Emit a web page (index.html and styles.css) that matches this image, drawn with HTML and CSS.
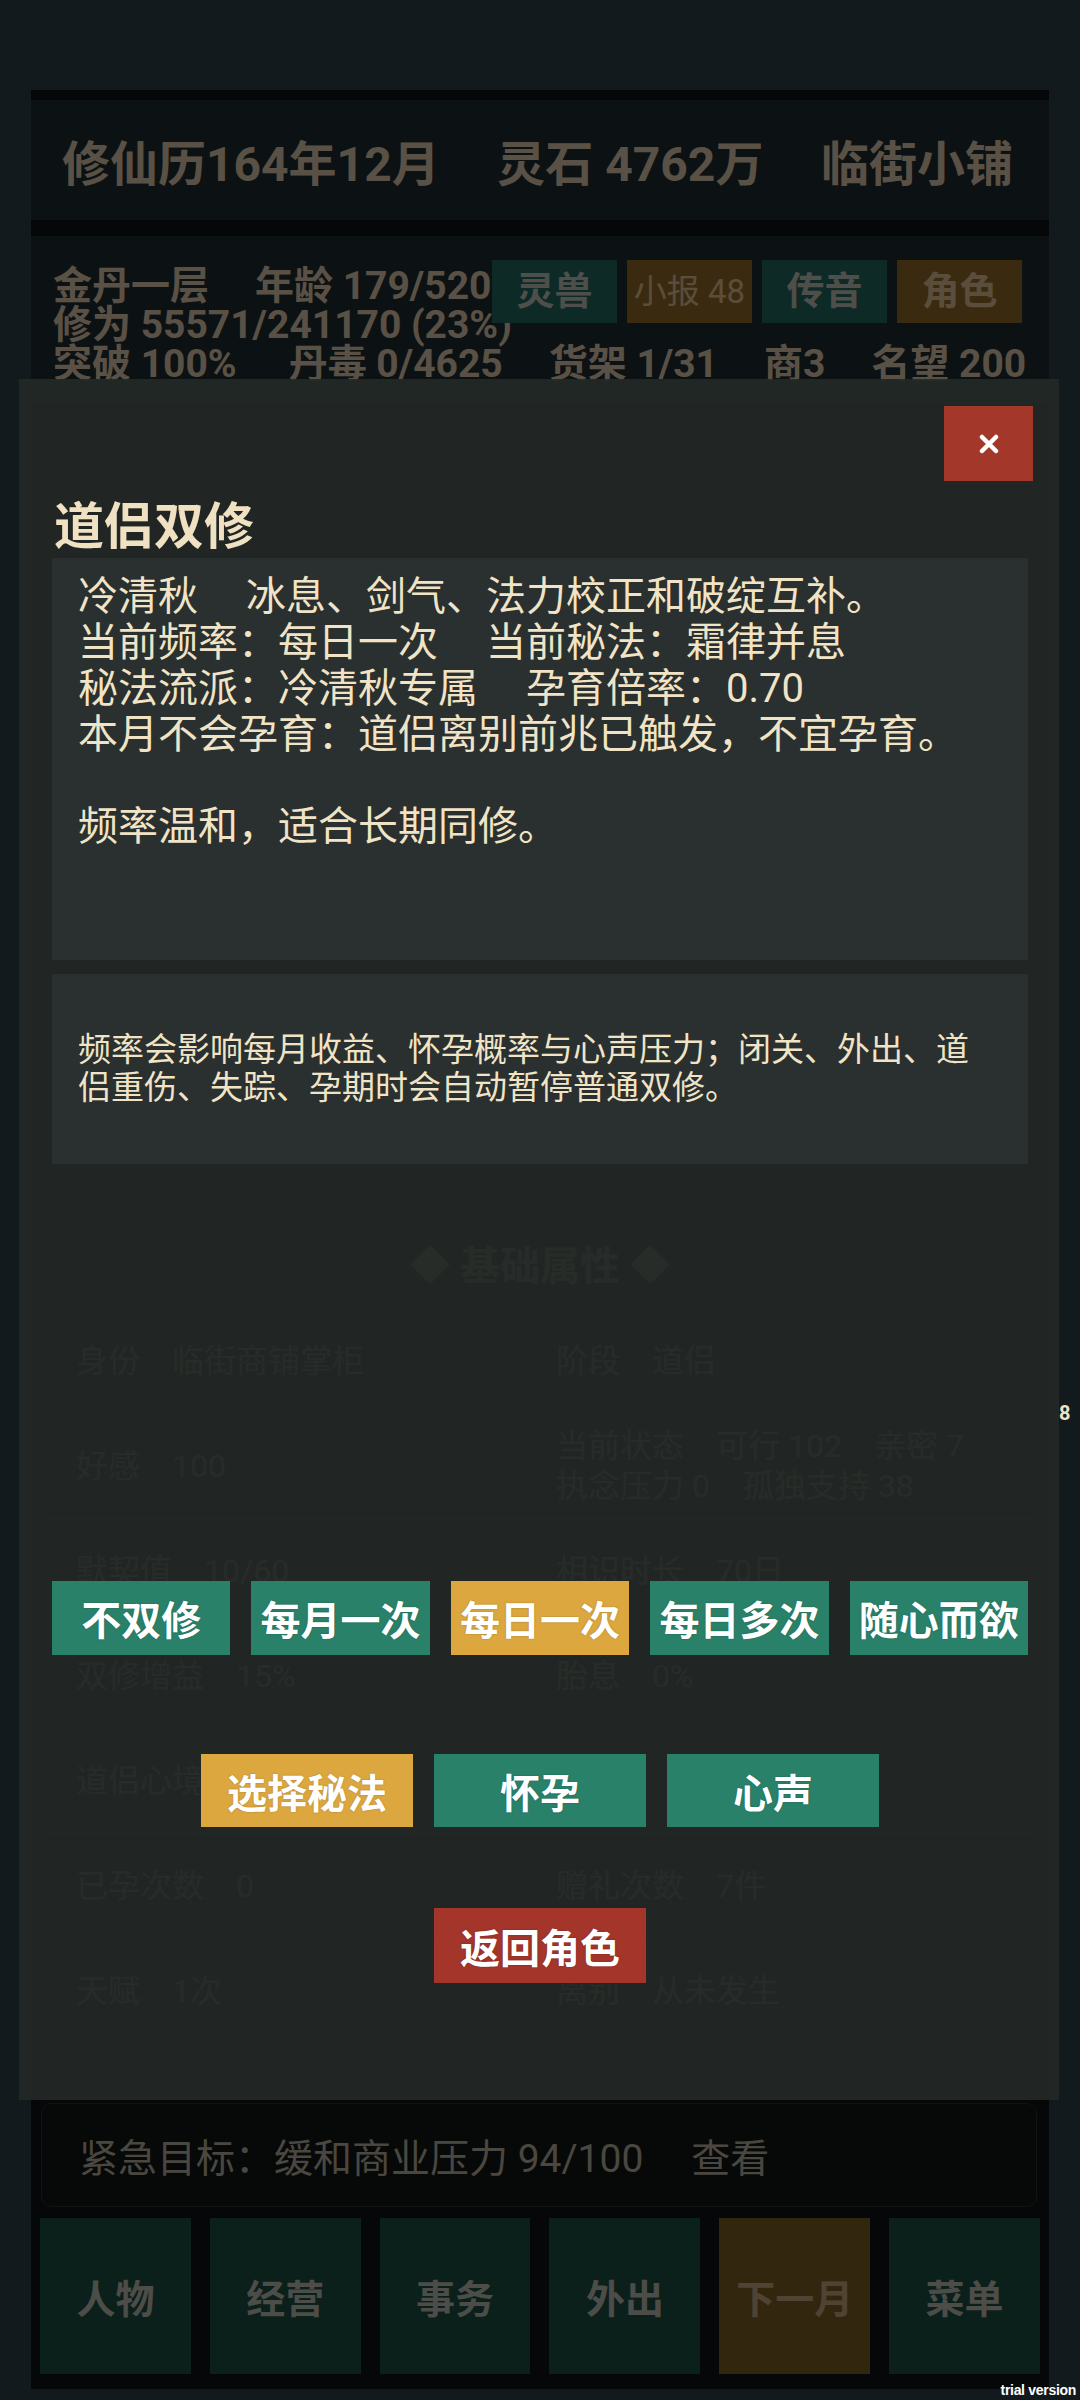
FILE: index.html
```html
<!DOCTYPE html>
<html lang="zh-CN">
<head>
  <meta charset="UTF-8">
  <title>道侣双修</title>
  <link rel="stylesheet" href="styles.css">
</head>
<body>
<div class="game">
  <div class="topbar">
    <span>修仙历164年12月</span>
    <span>灵石 4762万</span>
    <span>临街小铺</span>
  </div>

  <div class="stats">
    <div class="quick">
      <span class="qbtn teal">灵兽</span>
      <span class="qbtn amber small">小报 48</span>
      <span class="qbtn teal">传音</span>
      <span class="qbtn amber">角色</span>
    </div>
    <div>金丹一层<span class="sp"></span>年龄 179/520</div>
    <div>修为 55571/241170 (23%)</div>
    <div>突破 100%<span class="sp wide"></span>丹毒 0/4625<span class="sp"></span>货架 1/31<span class="sp"></span>商3<span class="sp"></span>名望 200</div>
  </div>

  <div class="content">
    <div class="section">
      <h3 class="sec-title">◆ 基础属性 ◆</h3>
      <div class="row"><span>身份　临街商铺掌柜</span><span>阶段　道侣</span></div>
      <div class="row"><span>好感　100</span><span>当前状态　可行 102　亲密 7<br>执念压力 0　孤独支持 38</span></div>
      <div class="row"><span>默契值　10/60</span><span>相识时长　70日</span></div>
      <div class="row"><span>双修增益　15%</span><span>胎息　0%</span></div>
      <div class="row"><span>道侣心境</span><span></span></div>
      <div class="row"><span>已孕次数　0</span><span>赠礼次数　7件</span></div>
      <div class="row"><span>天赋　1次</span><span>离别　从未发生</span></div>
    </div>
  </div>

  <div class="urgent">紧急目标：缓和商业压力 94/100<span class="look">查看</span></div>

  <div class="nav">
    <span class="nbtn">人物</span>
    <span class="nbtn">经营</span>
    <span class="nbtn">事务</span>
    <span class="nbtn">外出</span>
    <span class="nbtn next">下一月</span>
    <span class="nbtn">菜单</span>
  </div>
</div>

<div class="backdrop"></div>

<div class="modal">
  <div class="modal-head">
    <span class="close">
      <svg width="20" height="20" viewBox="0 0 20 20"><path d="M3 3 L17 17 M17 3 L3 17" stroke="#fff" stroke-width="4.5" stroke-linecap="round"/></svg>
    </span>
  </div>
  <h2 class="modal-title">道侣双修</h2>

  <div class="box info">
    <div>冷清秋<span class="gap"></span>冰息、剑气、法力校正和破绽互补。</div>
    <div>当前频率：每日一次<span class="gap"></span>当前秘法：霜律并息</div>
    <div>秘法流派：冷清秋专属<span class="gap"></span>孕育倍率：0.70</div>
    <div>本月不会孕育：道侣离别前兆已触发，不宜孕育。</div>
    <div class="note">频率温和，适合长期同修。</div>
  </div>

  <div class="box hint">频率会影响每月收益、怀孕概率与心声压力；闭关、外出、道侣重伤、失踪、孕期时会自动暂停普通双修。</div>

  <div class="freq">
    <span class="btn teal">不双修</span>
    <span class="btn teal">每月一次</span>
    <span class="btn amber">每日一次</span>
    <span class="btn teal">每日多次</span>
    <span class="btn teal">随心而欲</span>
  </div>

  <div class="actions">
    <span class="btn amber">选择秘法</span>
    <span class="btn teal">怀孕</span>
    <span class="btn teal">心声</span>
  </div>

  <div class="actions back">
    <span class="btn red">返回角色</span>
  </div>

  <span class="edge-mark">8</span>
</div>

<div class="watermark">trial version</div>
</body>
</html>
```

FILE: styles.css
```css
* {
    box-sizing: border-box;
}

body {
    margin: 0;
    width: 1080px;
    height: 2400px;
    position: relative;
    overflow: hidden;
    background-color: #2f414b;
    font-family: Roboto, "Noto Sans CJK SC", sans-serif;
    color: #e1caaf;
}

/* 背景の游戏画面 */
.game {
    margin: 90px 31px 0;
    height: 2299px;
    padding: 10px 0 15px;
    display: flex;
    flex-direction: column;
    background-color: #0d1214;
}

.topbar {
    height: 120px;
    padding: 0 36px 0 31px;
    display: flex;
    align-items: center;
    justify-content: space-between;
    background-color: #1e2d30;
    font-size: 48px;
    font-weight: bold;
}

.stats {
    position: relative;
    margin-top: 16px;
    padding: 31px 22px 20px;
    background-color: #1e2d30;
    font-size: 39px;
    font-weight: bold;
    line-height: 39px;
    white-space: nowrap;
}

.sp {
    display: inline-block;
    width: 46px;
}

.sp.wide {
    width: 52px;
}

.quick {
    position: absolute;
    top: 24px;
    right: 27px;
    display: flex;
    gap: 10px;
}

.qbtn {
    width: 125px;
    height: 63px;
    display: flex;
    align-items: center;
    justify-content: center;
    font-size: 38px;
}

.qbtn.teal {
    background-color: #23695f;
    color: #c3c3b9;
}

.qbtn.amber {
    background-color: #916b28;
    color: #e4c194;
}

.qbtn.small {
    font-size: 33px;
    font-weight: normal;
}

.content {
    flex: 1;
    display: flex;
    flex-direction: column;
}

.section {
    margin-top: auto;
    margin-bottom: 58px;
    padding: 0 10px;
}

.sec-title {
    margin: 0 0 13px;
    height: 60px;
    line-height: 60px;
    text-align: center;
    font-size: 40px;
}

.row {
    height: 105px;
    padding-left: 35px;
    display: grid;
    grid-template-columns: 480px 1fr;
    align-items: center;
    border-bottom: 3px solid #1e2d30;
    font-size: 32px;
    line-height: 40px;
    white-space: nowrap;
}

.urgent {
    height: 104px;
    margin: 0 12px 0 10px;
    padding-left: 37px;
    display: flex;
    align-items: center;
    border: 1px solid #263033;
    border-radius: 10px;
    background-color: #121515;
    font-size: 39px;
    color: #b9b2a0;
}

.look {
    margin-left: 48px;
}

.nav {
    height: 156px;
    margin: 11px 9px 0;
    display: grid;
    grid-template-columns: repeat(6, 1fr);
    gap: 19px;
}

.nbtn {
    display: flex;
    align-items: center;
    justify-content: center;
    background-color: #1c4e44;
    color: #bebeb4;
    font-size: 39px;
    font-weight: bold;
}

.nbtn.next {
    background-color: #805f26;
    color: #c9a880;
}

.backdrop {
    position: absolute;
    inset: 0;
    background-color: rgba(0, 0, 0, 0.6);
}

/* ポップアップ */
.modal {
    position: absolute;
    top: 379px;
    left: 19px;
    width: 1040px;
    height: 1721px;
    padding: 27px 31px 0 33px;
    display: flex;
    flex-direction: column;
    background-color: rgba(35, 41, 39, 0.93);
    color: #f1e4c6;
}

.modal-head {
    display: flex;
    justify-content: flex-end;
    margin-right: -5px;
}

.close {
    width: 89px;
    height: 75px;
    display: flex;
    align-items: center;
    justify-content: center;
    background-color: #a3372a;
}

.modal-title {
    margin: 16px 0 1px 2px;
    height: 60px;
    line-height: 60px;
    font-size: 50px;
    font-weight: bold;
    color: #f0e1c2;
}

.box {
    background-color: #2a2f2f;
}

.info {
    min-height: 402px;
    padding: 16px 26px 0;
    font-size: 40px;
    line-height: 46px;
}

.gap {
    display: inline-block;
    width: 48px;
}

.note {
    margin-top: 46px;
}

.hint {
    margin-top: 14px;
    padding: 57px 40px 57px 26px;
    font-size: 33px;
    line-height: 38px;
}

.btn {
    display: flex;
    align-items: center;
    justify-content: center;
    color: #ffffff;
    font-size: 40px;
    font-weight: bold;
    text-shadow: 0 0 2px rgba(0, 0, 0, 0.25);
}

.btn.teal {
    background-color: #2a816a;
}

.btn.amber {
    background-color: #dca73f;
}

.btn.red {
    background-color: #a3352a;
}

.freq {
    margin-top: 417px;
    height: 74px;
    display: flex;
    gap: 21px;
}

.freq .btn {
    flex: 1;
}

.actions {
    margin-top: 99px;
    height: 73px;
    display: flex;
    justify-content: center;
    gap: 21px;
}

.actions .btn {
    width: 212px;
}

.actions.back {
    margin-top: 81px;
    height: 75px;
}

.edge-mark {
    position: absolute;
    left: 1040px;
    top: 1022px;
    font-size: 20px;
    font-weight: bold;
    color: #f0e1c2;
}

.watermark {
    position: absolute;
    right: 4px;
    bottom: 2px;
    font-family: "Liberation Sans Narrow", "Liberation Sans", sans-serif;
    font-size: 14px;
    font-weight: bold;
    letter-spacing: -0.3px;
    color: #ffffff;
}
```
